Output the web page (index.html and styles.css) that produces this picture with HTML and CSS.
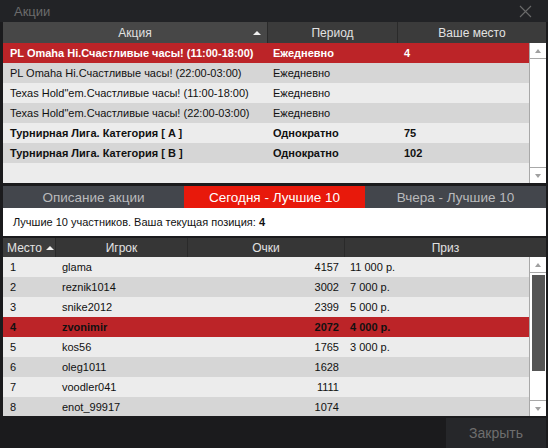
FILE: index.html
```html
<!DOCTYPE html>
<html>
<head>
<meta charset="utf-8">
<link rel="stylesheet" href="styles.css">
</head>
<body>
<div class="window">
  <div class="titlebar">
    <span class="title">Акции</span>
    <svg class="close" width="13" height="13" viewBox="0 0 13 13"><path d="M1 1L12 12M12 1L1 12" stroke="#6a6a6a" stroke-width="1.1" fill="none"/></svg>
  </div>
  <div class="content">
    <div class="promo">
      <div class="promo-head">
        <div class="hcell sorted">Акция<span class="arrow arrow-top"></span></div>
        <div class="hcell">Период</div>
        <div class="hcell">Ваше место</div>
      </div>
      <div class="promo-body">
        <div class="rows">
          <div class="prow sel"><span>PL Omaha Hi.Счастливые часы! (11:00-18:00)</span><span>Ежедневно</span><span>4</span></div>
          <div class="prow dark"><span>PL Omaha Hi.Счастливые часы! (22:00-03:00)</span><span>Ежедневно</span><span></span></div>
          <div class="prow light"><span>Texas Hold"em.Счастливые часы! (11:00-18:00)</span><span>Ежедневно</span><span></span></div>
          <div class="prow dark"><span>Texas Hold"em.Счастливые часы! (22:00-03:00)</span><span>Ежедневно</span><span></span></div>
          <div class="prow light bold"><span>Турнирная Лига. Категория [ A ]</span><span>Однократно</span><span>75</span></div>
          <div class="prow dark bold"><span>Турнирная Лига. Категория [ B ]</span><span>Однократно</span><span>102</span></div>
          <div class="prow light"><span></span><span></span><span></span></div>
        </div>
        <div class="scroll">
          <div class="sbtn up"><span class="tri-up"></span></div>
          <div class="strack"></div>
          <div class="sbtn down"><span class="tri-down"></span></div>
        </div>
      </div>
    </div>
    <div class="tabs">
      <div class="tab">Описание акции</div>
      <div class="tab active">Сегодня - Лучшие 10</div>
      <div class="tab">Вчера - Лучшие 10</div>
    </div>
    <div class="info">Лучшие 10 участников. Ваша текущая позиция: <b>4</b></div>
    <div class="leader">
      <div class="lead-head">
        <div class="hcell left sorted">Место<span class="arrow arrow-low"></span></div>
        <div class="hcell">Игрок</div>
        <div class="hcell">Очки</div>
        <div class="hcell">Приз</div>
      </div>
      <div class="lead-body">
        <div class="rows">
          <div class="lrow light"><span>1</span><span>glama</span><span class="num">4157</span><span>11 000 р.</span></div>
          <div class="lrow dark"><span>2</span><span>reznik1014</span><span class="num">3002</span><span>7 000 р.</span></div>
          <div class="lrow light"><span>3</span><span>snike2012</span><span class="num">2399</span><span>5 000 р.</span></div>
          <div class="lrow sel"><span>4</span><span>zvonimir</span><span class="num">2072</span><span>4 000 р.</span></div>
          <div class="lrow light"><span>5</span><span>kos56</span><span class="num">1765</span><span>3 000 р.</span></div>
          <div class="lrow dark"><span>6</span><span>oleg1011</span><span class="num">1628</span><span></span></div>
          <div class="lrow light"><span>7</span><span>voodler041</span><span class="num">1111</span><span></span></div>
          <div class="lrow dark"><span>8</span><span>enot_99917</span><span class="num">1074</span><span></span></div>
        </div>
        <div class="scroll">
          <div class="sbtn up"><span class="tri-up"></span></div>
          <div class="strack"><div class="thumb"></div></div>
          <div class="sbtn down"><span class="tri-down"></span></div>
        </div>
      </div>
    </div>
    <div class="footer">
      <div class="btn">Закрыть</div>
    </div>
  </div>
</div>
</body>
</html>
```
FILE: styles.css
```css
* { box-sizing: border-box; }
html, body { margin: 0; padding: 0; }
body {
  width: 548px;
  height: 448px;
  overflow: hidden;
  background: #1b1b1d;
  font-family: "Liberation Sans", Arial, sans-serif;
}
.window { width: 548px; height: 448px; display: flex; flex-direction: column; }
.titlebar {
  height: 22px;
  background: #222326;
  display: flex;
  align-items: center;
  justify-content: space-between;
  padding: 0 16px 0 14px;
}
.title { color: #6c6c6c; font-size: 13px; }
.close { display: block; margin-top: 1px; }
.content { margin: 0 2px 0 3px; display: flex; flex-direction: column; }

.hcell {
  color: #e2e2e2;
  font-size: 12px;
  display: flex;
  align-items: center;
  justify-content: center;
  position: relative;
  border-right: 1px solid #2a2a2a;
}
.hcell:last-child { border-right: none; }

.promo-head {
  height: 21px;
  display: grid;
  grid-template-columns: 265px 130px 148px;
  background: #3b3b3b;
}
.promo-head .sorted { background: #474747; }
.arrow {
  position: absolute;
  width: 0; height: 0;
  border-left: 4px solid transparent;
  border-right: 4px solid transparent;
  border-bottom: 4px solid #f0f0f0;
}
.arrow-top { right: 6px; top: 9px; }
.arrow-low { left: 43px; top: 8px; }

.promo-body, .lead-body { display: flex; }
.promo-body { height: 140px; }
.rows { width: 526px; overflow: hidden; }
.prow {
  height: 20px;
  display: grid;
  grid-template-columns: 265px 130px 131px;
  align-items: center;
  font-size: 11px;
  color: #111;
}
.prow span:nth-child(1) { padding-left: 7px; }
.prow span:nth-child(2) { padding-left: 5px; }
.prow span:nth-child(3) { padding-left: 6px; }
.light { background: #ececec; }
.dark { background: #d6d6d6; }
.sel { background: #bc2428; color: #fff; font-weight: bold; }
.bold { font-weight: bold; }

.scroll {
  width: 17px;
  background: #fff;
  border-left: 1px solid #a8a8a8;
  display: flex;
  flex-direction: column;
}
.sbtn { height: 16px; display: flex; align-items: center; justify-content: center; }
.sbtn.up { border-bottom: 1px solid #a8a8a8; }
.sbtn.down { border-top: 1px solid #a8a8a8; }
.strack { flex: 1; position: relative; }
.tri-up, .tri-down { width: 0; height: 0; border-left: 3px solid transparent; border-right: 3px solid transparent; }
.tri-up { border-bottom: 4px solid #a0a0a0; }
.tri-down { border-top: 4px solid #a0a0a0; }
.thumb { position: absolute; left: 2px; right: 1px; top: 2px; height: 96px; background: #555; }

.tabs {
  margin-top: 3px;
  height: 22px;
  display: grid;
  grid-template-columns: 181px 181px 181px;
}
.tab {
  background: #43464c;
  color: #b9babc;
  font-size: 13.5px;
  display: flex;
  align-items: center;
  justify-content: center;
}
.tab.active { background: #e8190b; color: #fff; }

.info {
  height: 28px;
  background: #fff;
  color: #111;
  font-size: 11px;
  display: flex;
  align-items: center;
  padding-left: 10px;
  white-space: pre;
}

.leader { margin-top: 2px; }
.lead-head {
  height: 19px;
  display: grid;
  grid-template-columns: 53px 132px 157px 201px;
  background: #363636;
}
.lead-head .sorted { background: #3d3d3d; justify-content: flex-start; padding-left: 4px; }
.lead-body { height: 159px; }
.lrow {
  height: 20px;
  display: grid;
  grid-template-columns: 53px 132px 157px 184px;
  align-items: center;
  font-size: 11px;
  color: #111;
}
.lrow span:nth-child(1) { padding-left: 7px; }
.lrow span:nth-child(2) { padding-left: 6px; }
.lrow .num { text-align: right; padding-right: 6px; }
.lrow span:nth-child(4) { padding-left: 5px; }

.footer { height: 32px; display: flex; justify-content: flex-end; align-items: flex-end; }
.btn {
  width: 100px;
  height: 30px;
  background: #26272a;
  color: #6e6e6e;
  font-size: 14px;
  display: flex;
  align-items: center;
  justify-content: center;
}
```
